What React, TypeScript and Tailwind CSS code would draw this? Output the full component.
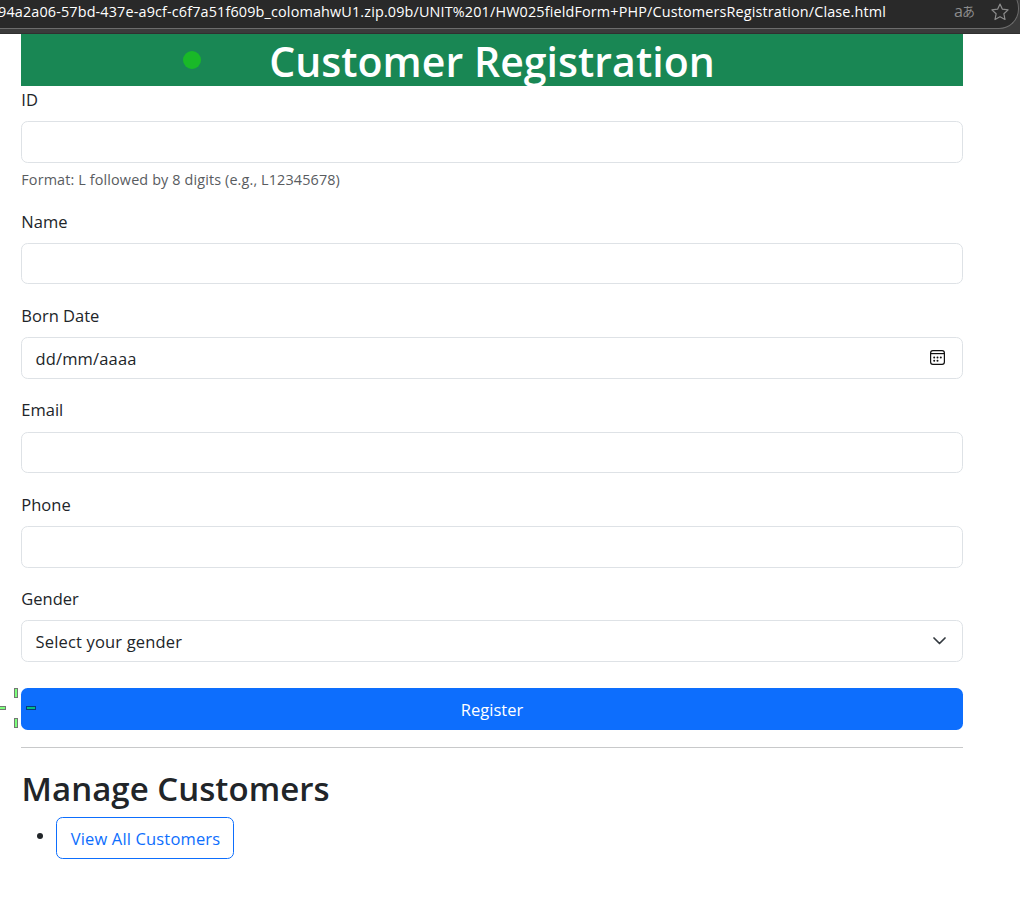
import type { ReactNode } from "react";

function Label({ children }: { children: ReactNode }) {
  return (
    <label className="mb-[8.8px] block h-[26.4px] whitespace-nowrap pl-[0.3px] leading-[28.4px]">
      <span>{children}</span>
    </label>
  );
}

const box = "flex h-[41.6px] w-full items-center justify-between rounded-[6.6px] border border-[#dee2e6] bg-white pl-[13.5px]";

function BrowserBar() {
  return (
    <header className="h-[34px] overflow-hidden border-b border-[#303030] bg-[#3b3b3b]">
      <div className="-mt-3 flex h-[41px] w-[1019px] items-center justify-between rounded-r-[20px] border-b border-r border-[#6c6c6c] bg-[#292929] pt-[6px] text-white">
        <span className="-ml-[2px] whitespace-nowrap pt-[2px] text-[14.4px] tracking-[0.147px]">
          94a2a06-57bd-437e-a9cf-c6f7a51f609b_colomahwU1.zip.09b/UNIT%201/HW025fieldForm+PHP/CustomersRegistration/Clase.html
        </span>
        <span className="flex items-center pr-[9px] text-[#8c8c8c]">
          <span className="mr-4 flex items-center leading-none">
            <span className="text-[16px]">a</span>
            <span className="-ml-px -mt-px font-['Noto_Sans_CJK_JP',sans-serif] text-[13px]">あ</span>
          </span>
          <svg className="mt-px" width="18" height="18" viewBox="0 0 18 18" fill="none" stroke="currentColor" strokeWidth="1.2" strokeLinejoin="round">
            <path d="M9 1l2.4 5.2 5.7.7-4.2 3.9 1.1 5.7L9 13.7l-5 2.8 1.1-5.7L.9 6.9l5.7-.7z" />
          </svg>
        </span>
      </div>
    </header>
  );
}

export default function App() {
  return (
    <div className="relative h-[908px] w-[1020px] overflow-hidden bg-white font-['Open_Sans','Noto_Sans',sans-serif] text-[16.5px] leading-[26.4px] text-[#212529]">
      <BrowserBar />
      <main className="ml-[21px] w-[942px]">
        <h1 className="relative h-[51.75px] bg-[#198754] text-center text-[41px] font-semibold leading-[54px] text-white">
          <span className="whitespace-nowrap tracking-[0.05px]">Customer Registration</span>
          <span className="absolute left-[162px] top-[17px] size-[18px] rounded-full bg-[#19b928]" />
        </h1>
        <form>
          <div className="mb-[17.6px]">
            <Label>ID</Label>
            <div className={box} />
            <div className="mt-[4.4px] h-[23.1px] whitespace-nowrap pl-[0.3px] text-[14.4px] leading-[25.1px] tracking-[0.13px] text-[#595c5f]"><span>Format: L followed by 8 digits (e.g., L12345678)</span></div>
          </div>
          <div className="mb-[17.6px]">
            <Label>Name</Label>
            <div className={box} />
          </div>
          <div className="mb-[17.6px]">
            <Label>Born Date</Label>
            <div className={box}>
              <span className="pt-[2px] tracking-[0.15px]">dd/mm/aaaa</span>
              <svg className="mb-[1.5px] mr-[17px]" width="15" height="15" viewBox="0 0 15 15" fill="none" stroke="#111" strokeWidth="1.2">
                <rect x=".6" y=".6" width="13.8" height="13.8" rx="2.3" />
                <path d="M.6 3.6h13.8" />
                <g fill="#111" stroke="none">
                  <circle cx="4.2" cy="7.6" r="1" /><circle cx="7.5" cy="7.6" r="1" /><circle cx="10.8" cy="7.6" r="1" />
                  <circle cx="4.2" cy="10.8" r="1" /><circle cx="7.5" cy="10.8" r="1" />
                </g>
              </svg>
            </div>
          </div>
          <div className="mb-[17.6px]">
            <Label>Email</Label>
            <div className={box} />
          </div>
          <div className="mb-[17.6px]">
            <Label>Phone</Label>
            <div className={box} />
          </div>
          <div className="mb-[26px]">
            <Label>Gender</Label>
            <div className={box}>
              <span className="pt-[2px] tracking-[0.17px]">Select your gender</span>
              <svg className="mr-[16px]" width="13" height="8" viewBox="0 0 13 8" fill="none" stroke="#343a40" strokeWidth="1.7" strokeLinecap="round" strokeLinejoin="round">
                <path d="M1 1l5.5 5.5L12 1" />
              </svg>
            </div>
          </div>
          <button type="button" className="flex h-[42px] w-full items-center justify-center rounded-[6.6px] bg-[#0d6efd] text-white">
            <span className="pt-[2px]">Register</span>
          </button>
        </form>
        <hr className="mb-[20px] mt-[17px] border-t border-[#c8c9ca]" />
        <h2 className="mb-[7px] h-[42px] whitespace-nowrap pl-[0.5px] text-[33px] font-semibold leading-[42px] tracking-[0.04px]"><span>Manage Customers</span></h2>
        <ul>
          <li className="flex items-center">
            <span className="-mt-1 ml-[16px] mr-[13px] size-[6px] rounded-full bg-[#212529]" />
            <a className="flex h-[42px] w-[178px] items-center justify-center whitespace-nowrap rounded-[6.6px] border border-[#0d6efd] pl-px tracking-[0.15px] text-[#0d6efd]"><span className="pt-[2px]">View All Customers</span></a>
          </li>
        </ul>
      </main>
      <span className="absolute left-[14px] top-[688px] h-[10px] w-[4px] border border-[#727972] bg-[#7dff7d]" />
      <span className="absolute left-[14px] top-[718px] h-[10px] w-[4px] border border-[#727972] bg-[#7dff7d]" />
      <span className="absolute -left-1 top-[706px] h-[4px] w-[10px] border border-[#727972] bg-[#7dff7d]" />
      <span className="absolute left-[26px] top-[706px] h-[4px] w-[10px] border border-[#063a80] bg-[#08bd80]" />
    </div>
  );
}
